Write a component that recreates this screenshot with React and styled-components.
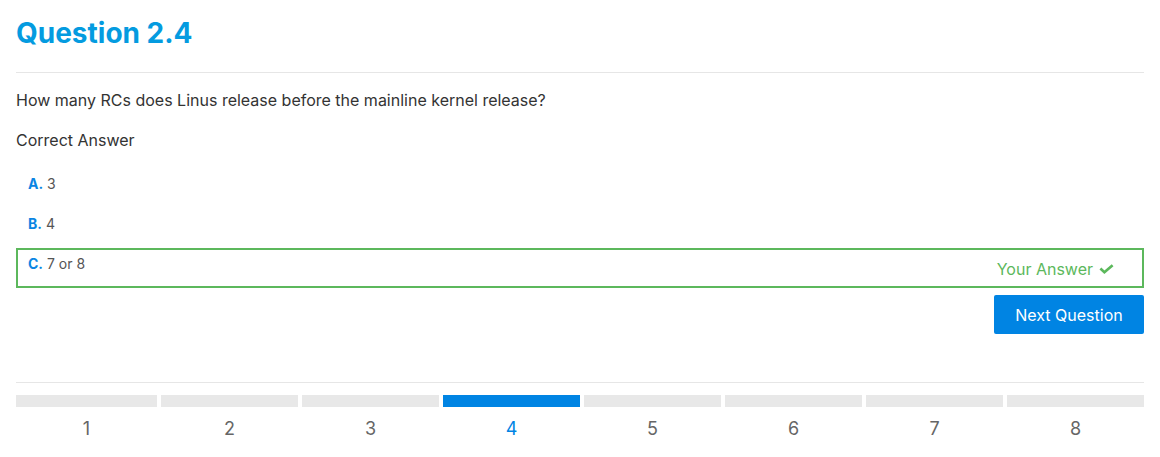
import React from "react";
import styled, { createGlobalStyle } from "styled-components";

const Global = createGlobalStyle`
  html, body { margin: 0; padding: 0; background: #fff; }
  body { font-family: Inter, "Noto Sans", sans-serif; color: #333; }
`;

const Page = styled.div`
  padding: 0 16px;
  display: flex;
  flex-direction: column;
`;

const Title = styled.h1`
  margin: 16px 0 0;
  padding-bottom: 22px;
  border-bottom: 1px solid #e6e6e6;
  font-size: 28px;
  line-height: 34px;
  font-weight: 700;
  color: #049be0;
`;

const Prompt = styled.p`
  margin: 15px 0 0;
  font-size: 16px;
  line-height: 24px;
  color: #333;
`;

const Subhead = styled.p`
  margin: 16px 0 0;
  font-size: 16px;
  line-height: 24px;
  color: #333;
`;

const Options = styled.div`
  margin-top: 16px;
  display: flex;
  flex-direction: column;
`;

const Option = styled.div`
  box-sizing: border-box;
  min-height: 40px;
  display: flex;
  justify-content: space-between;
  padding: 4px 28px 4px 10px;
  border: 2px solid ${(p) => (p.$selected ? "#5cb85c" : "transparent")};
`;

const OptionText = styled.div`
  align-self: flex-start;
  font-size: 14px;
  line-height: 20px;
  color: #555;
`;

const Letter = styled.span`
  font-weight: 700;
  color: #0a85e3;
`;

const Verdict = styled.div`
  align-self: center;
  display: flex;
  align-items: center;
  gap: 6px;
  font-size: 16px;
  line-height: 22px;
  color: #5cb85c;
  margin-top: 2px;
`;

const Actions = styled.div`
  display: flex;
  justify-content: flex-end;
  margin-top: 7px;
`;

const NextButton = styled.button`
  box-sizing: border-box;
  height: 39px;
  width: 150px;
  border: none;
  border-radius: 2px;
  background: #0084e3;
  color: #fff;
  font-family: Inter, "Noto Sans", sans-serif;
  font-size: 16px;
  cursor: pointer;
`;

const Divider = styled.div`
  margin-top: 48px;
  border-top: 1px solid #e6e6e6;
`;

const Steps = styled.div`
  display: grid;
  grid-template-columns: repeat(8, 1fr);
  margin-top: 12px;
`;

const Step = styled.div`
  display: flex;
  flex-direction: column;
  padding-left: ${(p) => (p.$first ? "0" : "4px")};
`;

const Bar = styled.div`
  height: 12px;
  background: ${(p) => (p.$active ? "#0084e3" : "#e8e8e8")};
`;

const StepNum = styled.div`
  margin-top: 8px;
  text-align: center;
  font-size: 18px;
  line-height: 27px;
  color: ${(p) => (p.$active ? "#0084e3" : "#666")};
`;

const Check = () => (
  <svg width="15" height="10" viewBox="0 0 15 10" aria-hidden="true">
    <polyline
      points="1.4,4.6 5.4,8.2 13.6,1.2"
      fill="none"
      stroke="#5cb85c"
      strokeWidth="2.7"
    />
  </svg>
);

const options = [
  { letter: "A.", text: "3" },
  { letter: "B.", text: "4" },
  { letter: "C.", text: "7 or 8", selected: true },
];

export default function App() {
  const current = 4;
  return (
    <>
      <Global />
      <Page>
        <Title>Question 2.4</Title>
        <Prompt>How many RCs does Linus release before the mainline kernel release?</Prompt>
        <Subhead>Correct Answer</Subhead>
        <Options>
          {options.map((o) => (
            <Option key={o.letter} $selected={o.selected}>
              <OptionText>
                <Letter>{o.letter}</Letter> {o.text}
              </OptionText>
              {o.selected && (
                <Verdict>
                  Your Answer <Check />
                </Verdict>
              )}
            </Option>
          ))}
        </Options>
        <Actions>
          <NextButton>Next Question</NextButton>
        </Actions>
        <Divider />
        <Steps>
          {Array.from({ length: 8 }, (_, i) => i + 1).map((n) => (
            <Step key={n} $first={n === 1}>
              <Bar $active={n === current} />
              <StepNum $active={n === current}>{n}</StepNum>
            </Step>
          ))}
        </Steps>
      </Page>
    </>
  );
}
